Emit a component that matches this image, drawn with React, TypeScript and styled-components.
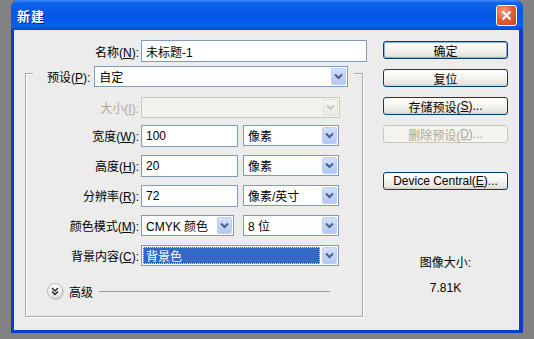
import React from "react";
import styled, { createGlobalStyle } from "styled-components";

const GlobalStyle = createGlobalStyle`
  html, body {
    margin: 0;
    padding: 0;
  }
  body {
    background: #828282;
    font-family: "Liberation Sans", "Noto Sans CJK SC", sans-serif;
    font-size: 12px;
    color: #000;
  }
`;

const Desk = styled.div`
  width: 534px;
  height: 339px;
  box-sizing: border-box;
  padding-left: 11px;
  background: #828282;
`;

const Window = styled.div`
  width: 512px;
  height: 333px;
  display: flex;
  flex-direction: column;
  background: #0a3cc8;
  border-radius: 8px 8px 0 0;
  overflow: hidden;
`;

const TitleBar = styled.div`
  height: 30px;
  flex: none;
  display: flex;
  align-items: center;
  justify-content: space-between;
  padding: 0 6px 0 6px;
  background: linear-gradient(
    to bottom,
    #3d8ffc 0%,
    #0c62ea 10%,
    #0556e4 45%,
    #0860ee 85%,
    #0448c8 100%
  );
`;

const Title = styled.div`
  color: #fff;
  font-family: "Noto Sans CJK SC", sans-serif;
  font-weight: 700;
  font-size: 13px;
  letter-spacing: 1px;
  text-shadow: 1px 1px 0 #0a1a8a;
`;

const CloseButton = styled.div`
  width: 21px;
  height: 21px;
  box-sizing: border-box;
  border: 1px solid #fff;
  border-radius: 3px;
  background: radial-gradient(circle at 35% 30%, #f4a68a 0%, #e0603c 45%, #c9431e 100%);
  display: flex;
  align-items: center;
  justify-content: center;
`;

const Client = styled.div`
  flex: 1;
  margin: 0 4px 3px 3px;
  background: #ececec;
  display: flex;
`;

const LeftPane = styled.div`
  width: 355px;
  padding-top: 10px;
  display: flex;
  flex-direction: column;
`;

const RightPane = styled.div`
  width: 125px;
  margin-left: 14px;
  padding-top: 11px;
  display: flex;
  flex-direction: column;
  align-items: stretch;
`;

const Row = styled.div<{ $h?: number }>`
  display: flex;
  align-items: center;
  height: ${({ $h }) => $h ?? 22}px;
  gap: 2px;
`;

const Label = styled.div<{ $w: number; $disabled?: boolean }>`
  width: ${({ $w }) => $w}px;
  flex: none;
  text-align: right;
  white-space: nowrap;
  color: ${({ $disabled }) => ($disabled ? "#aca899" : "#000")};
`;

const Field = styled.div<{ $w: number }>`
  width: ${({ $w }) => $w}px;
  height: 22px;
  box-sizing: border-box;
  border: 1px solid #7f9db9;
  background: #fff;
  padding-left: 4px;
  display: flex;
  align-items: center;
  white-space: nowrap;
`;

const Combo = styled.div<{ $w: number; $disabled?: boolean }>`
  width: ${({ $w }) => $w}px;
  height: 21px;
  box-sizing: border-box;
  border: 1px solid ${({ $disabled }) => ($disabled ? "#cbc9bd" : "#7f9db9")};
  background: ${({ $disabled }) => ($disabled ? "#f2f1eb" : "#fff")};
  padding: 1px;
  display: flex;
  align-items: stretch;
  flex: none;
`;

const ComboValue = styled.div<{ $selected?: boolean }>`
  flex: 1;
  display: flex;
  align-items: center;
  padding-left: 3px;
  margin-right: 2px;
  white-space: nowrap;
  background: ${({ $selected }) => ($selected ? "#316ac5" : "transparent")};
  color: ${({ $selected }) => ($selected ? "#fff" : "#000")};
  outline: ${({ $selected }) => ($selected ? "1px dotted #f0e080" : "none")};
  outline-offset: -1px;
`;

const ComboArrow = styled.div<{ $disabled?: boolean }>`
  width: 15px;
  flex: none;
  box-sizing: border-box;
  border-radius: 2px;
  border: 1px solid ${({ $disabled }) => ($disabled ? "#e4e2d8" : "#bccff7")};
  background: ${({ $disabled }) =>
    $disabled
      ? "linear-gradient(#f5f4ef, #ebeae3)"
      : "linear-gradient(#d3defb, #b3c8f5)"};
  display: flex;
  align-items: center;
  justify-content: center;
`;

const GroupBox = styled.div`
  margin: 11px 0 0 11px;
  width: 338px;
  height: 244px;
  box-sizing: border-box;
  border: 1px solid #a8a8a8;
  box-shadow: 1px 1px 0 #fff, inset 1px 1px 0 #fff;
  display: flex;
  flex-direction: column;
`;

const Legend = styled.div`
  margin: -8px 0 0 7px;
  padding: 0 6px 0 14px;
  width: fit-content;
  height: 21px;
  background: #ececec;
  display: flex;
  align-items: center;
  gap: 4px;
`;

const Rows = styled.div`
  margin-top: 9px;
  display: flex;
  flex-direction: column;
`;

const FieldRows = styled.div`
  margin-top: 6px;
  display: flex;
  flex-direction: column;
  gap: 7px;
`;

const Pair = styled.div<{ $gap: number }>`
  display: flex;
  align-items: center;
  gap: ${({ $gap }) => $gap}px;
`;

const Advanced = styled.div`
  margin-top: 16px;
  padding: 0 32px 0 21px;
  display: flex;
  align-items: center;
  gap: 6px;
  height: 16px;
`;

const RoundButton = styled.div`
  width: 16px;
  height: 16px;
  box-sizing: border-box;
  border-radius: 50%;
  border: 1px solid #b8b8b8;
  background: linear-gradient(#ffffff, #e2e2e2);
  box-shadow: 1px 1px 1px rgba(0, 0, 0, 0.15);
  display: flex;
  align-items: center;
  justify-content: center;
`;

const Rule = styled.div`
  flex: 1;
  height: 1px;
  background: #9c9c9c;
`;

const Button = styled.div<{ $default?: boolean; $disabled?: boolean; $top?: number }>`
  height: 18px;
  margin-top: ${({ $top }) => $top ?? 0}px;
  box-sizing: border-box;
  border-radius: 3px;
  border: 1px solid ${({ $disabled }) => ($disabled ? "#cac8bb" : "#003c74")};
  background: ${({ $disabled }) =>
    $disabled
      ? "#f4f3ee"
      : "linear-gradient(#ffffff 0%, #f3f3ef 50%, #e6e5df 85%, #d4d0c6 100%)"};
  box-shadow: ${({ $default }) => ($default ? "inset 0 0 0 1px #8db2e8" : "none")};
  color: ${({ $disabled }) => ($disabled ? "#aca899" : "#000")};
  display: flex;
  align-items: center;
  justify-content: center;
  white-space: nowrap;
`;

const Info = styled.div<{ $top: number }>`
  margin-top: ${({ $top }) => $top}px;
  text-align: center;
  line-height: 14px;
`;

const Chevron = ({ disabled }: { disabled?: boolean }) => (
  <svg width="9" height="7" viewBox="0 0 9 7">
    <polyline
      points="1,1.5 4.5,5 8,1.5"
      fill="none"
      stroke={disabled ? "#c9c7ba" : "#4d6185"}
      strokeWidth="2"
    />
  </svg>
);

function Select({
  w,
  value,
  disabled,
  selected,
}: {
  w: number;
  value?: string;
  disabled?: boolean;
  selected?: boolean;
}) {
  return (
    <Combo $w={w} $disabled={disabled}>
      <ComboValue $selected={selected}>{value}</ComboValue>
      <ComboArrow $disabled={disabled}>
        <Chevron disabled={disabled} />
      </ComboArrow>
    </Combo>
  );
}

export default function App() {
  return (
    <>
      <GlobalStyle />
      <Desk>
        <Window>
          <TitleBar>
            <Title>新建</Title>
            <CloseButton>
              <svg width="11" height="11" viewBox="0 0 11 11">
                <path d="M1.5 1.5 L9.5 9.5 M9.5 1.5 L1.5 9.5" stroke="#fff" strokeWidth="2" />
              </svg>
            </CloseButton>
          </TitleBar>
          <Client>
            <LeftPane>
              <Row>
                <Label $w={125}>
                  名称(<u>N</u>):
                </Label>
                <Field $w={226}>未标题-1</Field>
              </Row>
              <GroupBox>
                <Legend>
                  <span>
                    预设(<u>P</u>):
                  </span>
                  <Select w={254} value="自定" />
                </Legend>
                <Rows>
                  <Row>
                    <Label $w={113} $disabled>
                      大小(<u>I</u>):
                    </Label>
                    <Select w={199} disabled />
                  </Row>
                  <FieldRows>
                    <Row $h={23}>
                      <Label $w={113}>
                        宽度(<u>W</u>):
                      </Label>
                      <Pair $gap={5}>
                        <Field $w={97}>100</Field>
                        <Select w={96} value="像素" />
                      </Pair>
                    </Row>
                    <Row $h={23}>
                      <Label $w={113}>
                        高度(<u>H</u>):
                      </Label>
                      <Pair $gap={5}>
                        <Field $w={97}>20</Field>
                        <Select w={96} value="像素" />
                      </Pair>
                    </Row>
                    <Row $h={23}>
                      <Label $w={113}>
                        分辨率(<u>R</u>):
                      </Label>
                      <Pair $gap={5}>
                        <Field $w={97}>72</Field>
                        <Select w={96} value="像素/英寸" />
                      </Pair>
                    </Row>
                    <Row $h={23}>
                      <Label $w={113}>
                        颜色模式(<u>M</u>):
                      </Label>
                      <Pair $gap={9}>
                        <Select w={93} value="CMYK 颜色" />
                        <Select w={96} value="8 位" />
                      </Pair>
                    </Row>
                    <Row $h={23}>
                      <Label $w={113}>
                        背景内容(<u>C</u>):
                      </Label>
                      <Select w={198} value="背景色" selected />
                    </Row>
                  </FieldRows>
                </Rows>
                <Advanced>
                  <RoundButton>
                    <svg width="8" height="9" viewBox="0 0 8 9">
                      <polyline points="1,1 4,4 7,1" fill="none" stroke="#222" strokeWidth="1.4" />
                      <polyline points="1,4.5 4,7.5 7,4.5" fill="none" stroke="#222" strokeWidth="1.4" />
                    </svg>
                  </RoundButton>
                  <span>高级</span>
                  <Rule />
                </Advanced>
              </GroupBox>
            </LeftPane>
            <RightPane>
              <Button $default>确定</Button>
              <Button $top={10}>复位</Button>
              <Button $top={10}>
                存储预设(<u>S</u>)...
              </Button>
              <Button $top={10} $disabled>
                删除预设(<u>D</u>)...
              </Button>
              <Button $top={29}>
                Device Central(<u>E</u>)...
              </Button>
              <Info $top={66}>图像大小:</Info>
              <Info $top={11}>7.81K</Info>
            </RightPane>
          </Client>
        </Window>
      </Desk>
    </>
  );
}
